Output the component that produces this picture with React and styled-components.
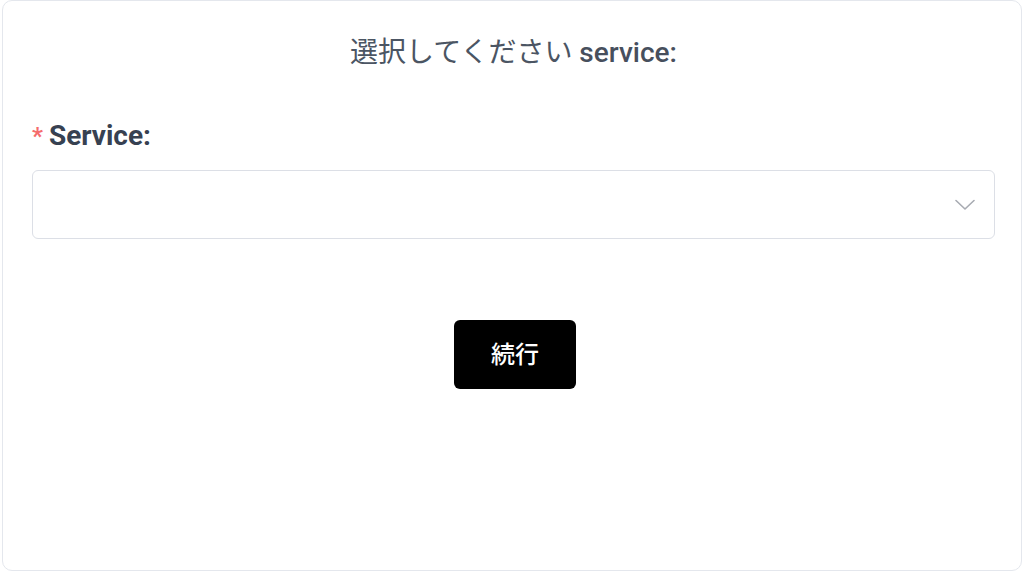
import React from "react";
import styled, { createGlobalStyle } from "styled-components";

const Global = createGlobalStyle`
  html, body { margin: 0; padding: 0; background: #ffffff; }
  body { font-family: Roboto, "Noto Sans CJK JP", sans-serif; }
  * { box-sizing: border-box; }
`;

const Page = styled.div`
  width: 1024px;
  height: 572px;
  padding: 0 2px 1px 2px;
  display: flex;
`;

const Card = styled.div`
  flex: 1;
  border: 1px solid #e4e7ed;
  border-radius: 10px;
  background: #fff;
  padding: 32px 26px 0 29px;
  display: flex;
  flex-direction: column;
`;

const Title = styled.div`
  text-align: center;
  font-size: 28px;
  line-height: 40px;
  color: #4b5563;
  font-weight: 400;
`;

const Latin = styled.span`
  font-weight: 500;
  color: #474f5d;
`;

const Field = styled.div`
  margin-top: 46px;
  display: flex;
  flex-direction: column;
`;

const Label = styled.label`
  font-size: 28px;
  font-weight: 700;
  color: #374151;
  line-height: 34px;
  display: flex;
  align-items: center;
  gap: 6px;
`;

const Star = styled.span`
  color: #f56c6c;
  font-weight: 700;
  font-size: 24px;
`;

const Select = styled.div`
  margin-top: 17px;
  height: 69px;
  border: 1px solid #dcdfe6;
  border-radius: 6px;
  display: flex;
  align-items: center;
  justify-content: flex-end;
  padding-right: 19px;
`;

const Actions = styled.div`
  margin-top: 81px;
  display: flex;
  justify-content: center;
`;

const Button = styled.button`
  width: 122px;
  height: 69px;
  background: #000;
  color: #fff;
  border: none;
  border-radius: 6px;
  font-size: 24px;
  font-weight: 500;
  font-family: Roboto, "Noto Sans CJK JP", sans-serif;
  margin-left: 3px;
  padding: 0 0 4px 0;
`;

const Chevron = () => (
  <svg width="20" height="12" viewBox="0 0 20 12" fill="none">
    <path d="M1 1.5 L10 10 L19 1.5" stroke="#a8abb2" strokeWidth="1.6" strokeLinecap="round" strokeLinejoin="round" />
  </svg>
);

export default function App() {
  return (
    <>
      <Global />
      <Page>
        <Card>
          <Title>
            選択してください <Latin>service:</Latin>
          </Title>
          <Field>
            <Label>
              <Star>*</Star>
              Service:
            </Label>
            <Select>
              <Chevron />
            </Select>
          </Field>
          <Actions>
            <Button>続行</Button>
          </Actions>
        </Card>
      </Page>
    </>
  );
}
